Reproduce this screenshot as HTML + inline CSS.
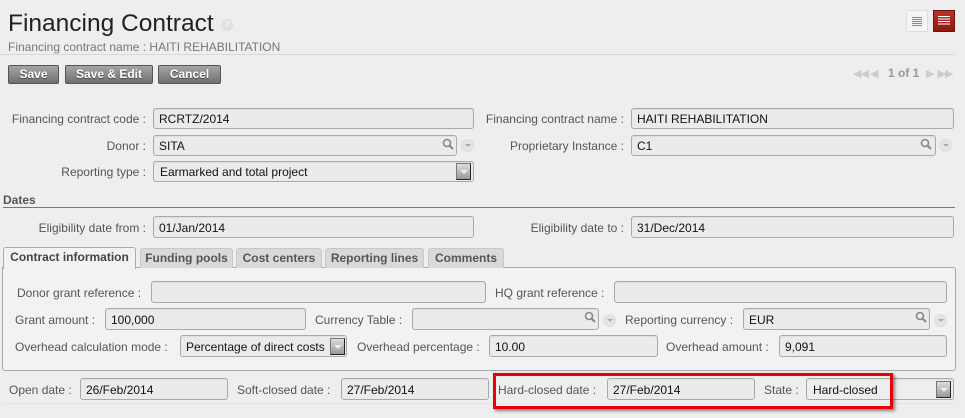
<!DOCTYPE html>
<html><head><style>
body{margin:0;width:965px;height:418px;background:#efeeee;font-family:"Liberation Sans",sans-serif;font-size:12px;color:#555;position:relative;overflow:hidden}
.a{position:absolute}
.l{position:absolute;text-align:right;white-space:nowrap;color:#555;font-size:12px;line-height:14px}
.i{position:absolute;box-sizing:border-box;border:1px solid #a9a9a9;border-radius:3px;background:#ebebeb;color:#111;font-size:12px;padding:3px 0 0 5px;white-space:nowrap;box-shadow:inset 0 1px 1px #ddd}
.btn{position:absolute;top:65px;height:19px;box-sizing:border-box;border:1px solid #555;border-radius:2px;background:linear-gradient(#a5a5a5,#707070);color:#fff;font-weight:bold;font-size:12px;text-align:center;line-height:17px;text-shadow:0 1px 1px #444}
.tab{position:absolute;top:248px;height:20px;box-sizing:border-box;border:1px solid #c8c8c8;border-bottom:none;background:#d9d9d9;border-radius:3px 3px 0 0;font-weight:bold;color:#555;text-align:center;line-height:18px}
.mg{position:absolute;width:12px;height:12px}
.dd{position:absolute;width:11px;height:11px;border-radius:50%;background:#e4e4e4;border:1px solid #ddd}
.dd:after{content:"";position:absolute;left:3px;top:4px;border-left:3px solid transparent;border-right:3px solid transparent;border-top:3px solid #aaa}
.sa{position:absolute;width:15px;height:17px;box-sizing:border-box;background:linear-gradient(#ddd,#999);border:1px solid #777;border-right-color:#222;border-bottom-color:#222}
.sa:after{content:"";position:absolute;left:3px;top:6px;border-left:4px solid transparent;border-right:4px solid transparent;border-top:4px solid #eee}
</style></head><body>
<div class="a" style="left:8px;top:9px;font-size:24.5px;color:#222;line-height:30px">Financing Contract</div>
<div class="a" style="left:221px;top:19px;width:12px;height:12px;border-radius:50%;background:#e0e0e0;color:#fff;font-size:8px;text-align:center;line-height:12px">?</div>
<div class="a" style="left:8px;top:40px;color:#777;font-size:12px">Financing contract name : HAITI REHABILITATION</div>
<div class="a" style="left:0;top:54px;width:955px;height:1px;background:#d8d8d8"></div>
<div class="a" style="left:906px;top:10px;width:22px;height:22px;box-sizing:border-box;border:1px solid #ddd;border-radius:2px;background:#f4f4f4"><div style="margin:6px 5px;height:9px;background:repeating-linear-gradient(#888 0 1px,transparent 1px 2px)"></div></div>
<div class="a" style="left:933px;top:10px;width:22px;height:22px;background:linear-gradient(#c0302a,#8e1a15);border:1px solid #6d120f;box-sizing:border-box"><div style="margin:5px 4px;height:10px;background:repeating-linear-gradient(#fff 0 1px,transparent 1px 2.5px)"></div></div>
<div class="btn" style="left:8px;width:51px">Save</div>
<div class="btn" style="left:65px;width:88px">Save &amp; Edit</div>
<div class="btn" style="left:158px;width:63px">Cancel</div>
<div class="a" style="left:853px;top:67px;color:#ccc;font-size:11px;letter-spacing:-1px">◀◀ ◀</div>
<div class="a" style="left:888px;top:66px;color:#999;font-weight:bold;font-size:12px">1 of 1</div>
<div class="a" style="left:926px;top:67px;color:#ccc;font-size:11px;letter-spacing:-1px">▶ &nbsp;▶▶</div>

<div class="l" style="left:0;width:146px;top:112px">Financing contract code :</div>
<div class="i" style="left:153px;top:108px;width:321px;height:21px">RCRTZ/2014</div>
<div class="l" style="left:470px;width:154px;top:112px">Financing contract name :</div>
<div class="i" style="left:631px;top:108px;width:323px;height:21px">HAITI REHABILITATION</div>
<div class="l" style="left:0;width:146px;top:139px">Donor :</div>
<div class="i" style="left:153px;top:135px;width:304px;height:21px">SITA</div>
<svg class="mg" style="left:442px;top:138px" viewBox="0 0 12 12"><circle cx="5" cy="5" r="3.5" fill="none" stroke="#888" stroke-width="1.6"/><path d="M7.5 7.5L11 11" stroke="#888" stroke-width="2"/></svg>
<div class="dd" style="left:461px;top:139px"></div>
<div class="l" style="left:470px;width:154px;top:139px">Proprietary Instance :</div>
<div class="i" style="left:631px;top:135px;width:305px;height:21px">C1</div>
<svg class="mg" style="left:920px;top:138px" viewBox="0 0 12 12"><circle cx="5" cy="5" r="3.5" fill="none" stroke="#888" stroke-width="1.6"/><path d="M7.5 7.5L11 11" stroke="#888" stroke-width="2"/></svg>
<div class="dd" style="left:939px;top:139px"></div>
<div class="l" style="left:0;width:146px;top:165px">Reporting type :</div>
<div class="i" style="left:153px;top:161px;width:321px;height:21px;padding-left:6px">Earmarked and total project</div>
<div class="sa" style="left:456px;top:163px"></div>

<div class="a" style="left:3px;top:193px;font-weight:bold;color:#555">Dates</div>
<div class="a" style="left:3px;top:207px;width:952px;height:1px;background:#777"></div>
<div class="l" style="left:0;width:146px;top:221px">Eligibility date from :</div>
<div class="i" style="left:153px;top:216px;width:321px;height:22px;padding-top:4px">01/Jan/2014</div>
<div class="l" style="left:470px;width:154px;top:221px">Eligibility date to :</div>
<div class="i" style="left:631px;top:216px;width:323px;height:22px;padding-top:4px">31/Dec/2014</div>

<div class="a" style="left:2px;top:267px;width:954px;height:104px;box-sizing:border-box;border:1px solid #aaa;border-radius:0 3px 3px 3px;background:#f2f2f2"></div>
<div class="tab" style="left:3px;width:133px;top:247px;height:22px;background:#f2f2f2;border-color:#aaa;color:#444">Contract information</div>
<div class="tab" style="left:140px;width:93px">Funding pools</div>
<div class="tab" style="left:236px;width:86px">Cost centers</div>
<div class="tab" style="left:325px;width:99px">Reporting lines</div>
<div class="tab" style="left:428px;width:76px">Comments</div>

<div class="l" style="left:17px;top:286px">Donor grant reference :</div>
<div class="i" style="left:151px;top:281px;width:335px;height:22px"></div>
<div class="l" style="left:495px;top:286px">HQ grant reference :</div>
<div class="i" style="left:614px;top:281px;width:333px;height:22px"></div>
<div class="l" style="left:15px;top:313px">Grant amount :</div>
<div class="i" style="left:105px;top:308px;width:201px;height:22px;padding-top:4px">100,000</div>
<div class="l" style="left:315px;top:313px">Currency Table :</div>
<div class="i" style="left:412px;top:308px;width:187px;height:22px"></div>
<svg class="mg" style="left:584px;top:311px" viewBox="0 0 12 12"><circle cx="5" cy="5" r="3.5" fill="none" stroke="#888" stroke-width="1.6"/><path d="M7.5 7.5L11 11" stroke="#888" stroke-width="2"/></svg>
<div class="dd" style="left:603px;top:314px"></div>
<div class="l" style="left:625px;top:313px">Reporting currency :</div>
<div class="i" style="left:743px;top:308px;width:187px;height:22px;padding-top:4px">EUR</div>
<svg class="mg" style="left:915px;top:311px" viewBox="0 0 12 12"><circle cx="5" cy="5" r="3.5" fill="none" stroke="#888" stroke-width="1.6"/><path d="M7.5 7.5L11 11" stroke="#888" stroke-width="2"/></svg>
<div class="dd" style="left:934px;top:314px"></div>
<div class="l" style="left:15px;top:340px">Overhead calculation mode :</div>
<div class="i" style="left:180px;top:335px;width:167px;height:22px;padding-top:4px">Percentage of direct costs</div>
<div class="sa" style="left:330px;top:338px"></div>
<div class="l" style="left:357px;top:340px">Overhead percentage :</div>
<div class="i" style="left:489px;top:335px;width:169px;height:22px;padding-top:4px">10.00</div>
<div class="l" style="left:666px;top:340px">Overhead amount :</div>
<div class="i" style="left:779px;top:335px;width:168px;height:22px;padding-top:4px">9,091</div>

<div class="a" style="left:2px;top:403px;width:954px;height:1px;background:#e4e4e4"></div>
<div class="l" style="left:9px;top:383px">Open date :</div>
<div class="i" style="left:80px;top:378px;width:148px;height:22px;padding-top:4px">26/Feb/2014</div>
<div class="l" style="left:237px;top:383px">Soft-closed date :</div>
<div class="i" style="left:341px;top:378px;width:148px;height:22px;padding-top:4px">27/Feb/2014</div>
<div class="l" style="left:498px;top:383px">Hard-closed date :</div>
<div class="i" style="left:607px;top:378px;width:148px;height:22px;padding-top:4px">27/Feb/2014</div>
<div class="l" style="left:764px;top:383px">State :</div>
<div class="i" style="left:806px;top:378px;width:148px;height:22px;padding-top:4px;padding-left:6px;background:#eee">Hard-closed</div>
<div class="sa" style="left:936px;top:381px"></div>
<div class="a" style="left:493px;top:373px;width:400px;height:36px;box-sizing:border-box;border:3px solid #e8000b;box-shadow:2px 2px 3px rgba(0,0,0,.45)"></div>
</body></html>
